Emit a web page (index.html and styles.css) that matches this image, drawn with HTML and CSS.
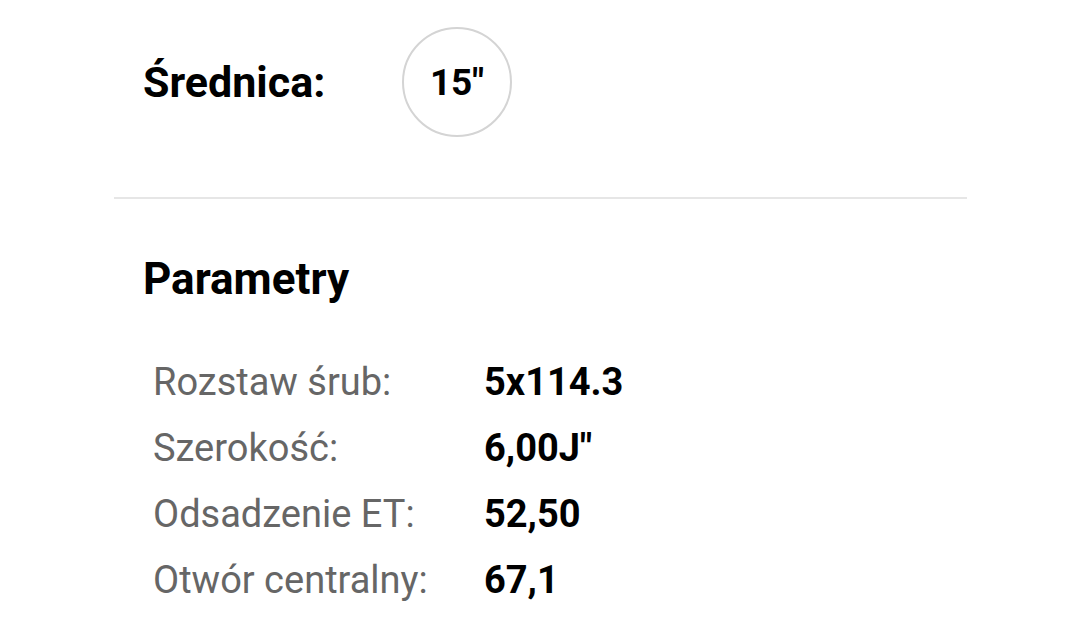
FILE: index.html
```html
<!DOCTYPE html>
<html lang="pl">
<head>
  <meta charset="UTF-8">
  <meta name="viewport" content="width=device-width, initial-scale=1.0">
  <title>Felga</title>
  <link rel="stylesheet" href="styles.css">
</head>
<body>
  <div class="product-container">
    <div class="size-row">
      <span class="size-label">Średnica:</span>
      <span class="size-option">15"</span>
    </div>
    <div class="params">
      <h2>Parametry</h2>
      <table>
        <tr>
          <td class="param-name">Rozstaw śrub:</td>
          <td class="param-value">5x114.3</td>
        </tr>
        <tr>
          <td class="param-name">Szerokość:</td>
          <td class="param-value">6,00J"</td>
        </tr>
        <tr>
          <td class="param-name">Odsadzenie ET:</td>
          <td class="param-value">52,50</td>
        </tr>
        <tr>
          <td class="param-name">Otwór centralny:</td>
          <td class="param-value">67,1</td>
        </tr>
      </table>
    </div>
  </div>
</body>
</html>
```

FILE: styles.css
```css
body {
  margin: 0;
  font-family: Roboto, "Liberation Sans", Arial, sans-serif;
  background: #fff;
  color: #000;
}
.product-container {
  width: 853px;
  margin-left: 114px;
}
.size-row {
  display: flex;
  align-items: center;
  padding: 27px 29px 60px;
  border-bottom: 2px solid #e6e6e6;
}
.size-label {
  font-size: 43px;
  font-weight: 700;
  width: 259px;
}
.size-option {
  width: 106px;
  height: 106px;
  border: 2px solid #d4d4d4;
  border-radius: 50%;
  display: flex;
  align-items: center;
  justify-content: center;
  font-size: 37px;
  font-weight: 700;
}
.params {
  padding: 0 29px;
}
.params h2 {
  margin: 54px 0 44px;
  font-size: 44px;
  font-weight: 700;
}
table {
  border-collapse: collapse;
  margin-left: 10px;
}
table td {
  padding: 0;
  height: 66px;
  font-size: 38px;
}
.param-name {
  width: 331px;
  color: #666;
}
.param-value {
  font-weight: 700;
}
```
